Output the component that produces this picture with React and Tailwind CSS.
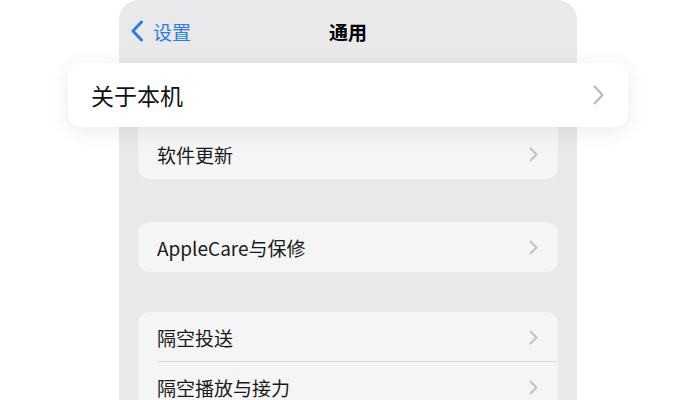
import React from "react";

const font = { fontFamily: '"Noto Sans CJK SC", "Noto Sans", sans-serif' };

function Chevron({ className = "", w = 9, h = 15, stroke = "#c2c2c6", sw = 2 }) {
  return (
    <svg width={w} height={h} viewBox={`0 0 ${w} ${h}`} className={className} fill="none">
      <path d={`M${sw / 2 + 0.5} ${sw / 2 + 0.5} L${w - sw / 2 - 0.5} ${h / 2} L${sw / 2 + 0.5} ${h - sw / 2 - 0.5}`} stroke={stroke} strokeWidth={sw} strokeLinecap="round" strokeLinejoin="round" />
    </svg>
  );
}

function Row({ label, sep }) {
  return (
    <div className="relative h-[50px] shrink-0 flex items-center pl-[19px] pr-[20px]">
      <span className="text-[19px] text-[#1a1a1a] leading-none">{label}</span>
      <div className="flex-1" />
      <Chevron />
      {sep && <div className="absolute left-[19px] right-0 bottom-0 h-px bg-[#dcdcdf]" />}
    </div>
  );
}

export default function App() {
  return (
    <div className="relative w-[696px] h-[400px] bg-white overflow-hidden" style={font}>
      <div className="ml-[119px] w-[458px] h-[400px] bg-[#e9e9ec] rounded-t-[20px] flex flex-col">
        <div className="relative h-[62px] shrink-0 flex items-center px-[11px]">
          <svg width="14" height="22" viewBox="0 0 14 22" fill="none">
            <path d="M11.5 2 L3 11 L11.5 20" stroke="#2f7dd6" strokeWidth="3" strokeLinecap="round" strokeLinejoin="round" />
          </svg>
          <span className="ml-[9px] text-[19px] text-[#2f7dd6] leading-none">设置</span>
          <span className="absolute left-0 right-0 text-center text-[19px] font-bold text-black leading-none pointer-events-none">通用</span>
        </div>
        <div className="shrink-0 mt-[15px] mx-[19px] bg-[#f5f5f6] rounded-[12px]">
          <div className="h-[52px]" />
          <Row label="软件更新" />
        </div>
        <div className="shrink-0 mt-[43px] mx-[19px] bg-[#f5f5f6] rounded-[12px]">
          <Row label="AppleCare与保修" />
        </div>
        <div className="shrink-0 mt-[40px] mx-[19px] bg-[#f5f5f6] rounded-[12px]">
          <Row label="隔空投送" sep />
          <Row label="隔空播放与接力" />
        </div>
      </div>
      <div className="absolute left-[68px] top-[63px] w-[560px] h-[64px] bg-white rounded-[14px] shadow-[0_4px_22px_rgba(0,0,0,0.08)] flex items-center pl-[23px] pr-[24px]">
        <span className="text-[23px] text-[#111] leading-none">关于本机</span>
        <div className="flex-1" />
        <Chevron w={11} h={20} stroke="#b9b9bc" sw={2.2} />
      </div>
    </div>
  );
}
